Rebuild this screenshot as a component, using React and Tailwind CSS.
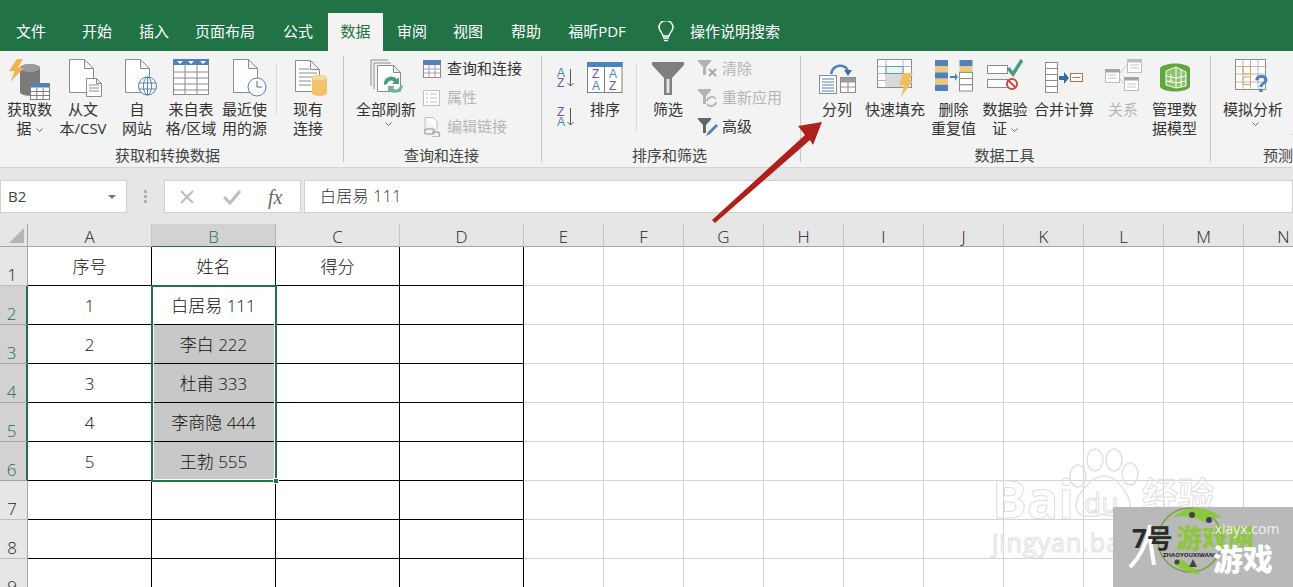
import React from 'react';

const GRAY = '#8c8c8c';
const BLUE = '#4f81bd';

// Ribbon icons, drawn in their own pixel boxes
const Doc = ({ x, y, w, h, fold = 9, stroke = GRAY }) => (
  <path
    d={`M${x} ${y}H${x + w - fold}L${x + w} ${y + fold}V${y + h}H${x}ZM${x + w - fold} ${y}V${y + fold}H${x + w}`}
    fill="#fff"
    stroke={stroke}
    strokeWidth="1"
  />
);

const MiniTable = ({ x, y, w, h, head = BLUE, stroke = '#7f7f7f' }) => (
  <g>
    <rect x={x} y={y} width={w} height={h} fill="#fff" stroke={stroke} />
    <rect x={x} y={y} width={w} height={4} fill={head} />
    <path d={`M${x} ${y + 8}H${x + w}M${x} ${y + 12}H${x + w}M${x + w / 3} ${y + 4}V${y + h}M${x + (2 * w) / 3} ${y + 4}V${y + h}`} stroke={stroke} fill="none" />
  </g>
);

const GetDataIcon = () => (
  <svg width="44" height="42" viewBox="0 0 44 42">
    <path d="M12 9c0-5 20-5 20 0v24c0 5-20 5-20 0Z" fill="#7a7a7a" />
    <ellipse cx="22" cy="9" rx="10" ry="4" fill="#9c9c9c" />
    <path d="M9 0h6l-5 9h6L2 23l5-11H1Z" fill="#f0b44c" />
    <MiniTable x={22.5} y={24.5} w={19} h={16} />
  </svg>
);

const FromTextIcon = () => (
  <svg width="36" height="38" viewBox="0 0 36 38">
    <Doc x={1.5} y={0.5} w={24} h={33} />
    <Doc x={18.5} y={19.5} w={15} h={18} fold={5} />
    <path d="M21 26h10M21 29h10M21 32h10" stroke={GRAY} />
  </svg>
);

const WebIcon = () => (
  <svg width="34" height="38" viewBox="0 0 34 38">
    <Doc x={1.5} y={0.5} w={24} h={33} />
    <circle cx="23.5" cy="27" r="9" fill="#fff" stroke={BLUE} />
    <ellipse cx="23.5" cy="27" rx="4" ry="9" fill="none" stroke={BLUE} />
    <path d="M15 24h17M15 30h17M23.5 18v18" stroke={BLUE} />
  </svg>
);

const FromTableIcon = () => (
  <svg width="36" height="36" viewBox="0 0 36 36">
    <rect x=".5" y=".5" width="35" height="35" fill="#fff" stroke={GRAY} />
    <rect x="0" y="0" width="36" height="6" fill={BLUE} />
    <path d="M.5 13H36M.5 19H36M.5 25H36M.5 31H36M12 6V36M24 6V36" stroke={GRAY} fill="none" />
    <path d="M4 2h6L7 5ZM15 2h6l-3 3ZM27 2h6l-3 3Z" fill="#fff" />
  </svg>
);

const RecentIcon = () => (
  <svg width="36" height="38" viewBox="0 0 36 38">
    <Doc x={1.5} y={0.5} w={24} h={33} />
    <circle cx="25" cy="28" r="9" fill="#fff" stroke={BLUE} />
    <path d="M25 22v6h5" stroke="#666" fill="none" />
  </svg>
);

const ExistingIcon = () => (
  <svg width="34" height="38" viewBox="0 0 34 38">
    <Doc x={1.5} y={1.5} w={24} h={31} />
    <path d="M5 10h10M5 14h18M5 18h18M5 22h12M5 26h12" stroke={GRAY} />
    <path d="M18 19c0-4 15-4 15 0v15c0 4-15 4-15 0Z" fill="#f2c36b" />
    <ellipse cx="25.5" cy="19" rx="7.5" ry="2.5" fill="#f7d998" />
  </svg>
);

const RefreshAllIcon = () => (
  <svg width="36" height="38" viewBox="0 0 36 38">
    <path d="M1 27V1h17M4 30V4h17" fill="none" stroke={GRAY} />
    <Doc x={7.5} y={6.5} w={23} h={26} fold={7} />
    <path d="M14 26a7.5 7.5 0 0 1 13-6l2-2v7h-7l2-2a4 4 0 0 0-7 2Z" fill="#4a9a7f" />
    <path d="M33 26a8 8 0 0 1-13 6l-2 2v-7h7l-2 2a4 4 0 0 0 7-2Z" fill="#6fb59c" />
  </svg>
);

const SortIcon = () => (
  <svg width="36" height="32" viewBox="0 0 36 32" fontFamily="'Liberation Sans',sans-serif" fontSize="12">
    <rect x=".5" y=".5" width="34.5" height="30" fill="#fff" stroke="#7f7f7f" />
    <rect x="0" y="0" width="35.5" height="5" fill={BLUE} />
    <path d="M17.5 5v26" stroke="#7f7f7f" />
    <text x="5" y="16" fill="#7a4fa3">Z</text>
    <text x="5" y="28" fill={BLUE}>A</text>
    <text x="22" y="16" fill={BLUE}>A</text>
    <text x="22" y="28" fill="#7a4fa3">Z</text>
  </svg>
);

const SortSmall = ({ top, bottom, topColor, bottomColor }) => (
  <svg className="overflow-visible" width="20" height="20" viewBox="0 0 20 20" fontFamily="'Liberation Sans',sans-serif" fontSize="12">
    <text x="1" y="9" fill={topColor}>{top}</text>
    <text x="1" y="19" fill={bottomColor}>{bottom}</text>
    <path d="M14.5 1v17M11.5 15l3 3 3-3" stroke="#555" fill="none" />
  </svg>
);

const FunnelIcon = () => (
  <svg width="32" height="33" viewBox="0 0 32 33">
    <path d="M0 0h32v3L20 16v17h-8V16L0 3Z" fill="#7f7f7f" />
    <path d="M14.5 17v14h3V17Z" fill="#e6e6e6" />
  </svg>
);

const SmallFunnel = ({ color = '#b3b3b3', children }) => (
  <svg width="20" height="20" viewBox="0 0 20 20">
    <path d="M0 1h13v1.5L8 8v8H5V8L0 2.5Z" fill={color} />
    {children}
  </svg>
);

const SplitIcon = () => (
  <svg width="37" height="32" viewBox="0 0 37 32">
    <path d="M12 12C14 2 26 1 29 9" fill="none" stroke={BLUE} strokeWidth="2.5" />
    <path d="M25 8h8l-4 6Z" fill="#3f6f9f" />
    <rect x=".5" y="13.5" width="17" height="18" fill="#fff" stroke={GRAY} />
    <path d="M3 17h12M3 20h12M3 23h12M3 26h12M3 29h12" stroke={BLUE} />
    <rect x="21.5" y="15.5" width="15" height="15" fill="#fff" stroke={GRAY} />
    <path d="M21.5 20h15M21.5 25h15M29 20v11" stroke={GRAY} />
    <rect x="22" y="16" width="14" height="4" fill="#9a9a9a" />
  </svg>
);

const FlashFillIcon = () => (
  <svg width="37" height="38" viewBox="0 0 37 38">
    <rect x=".5" y=".5" width="34" height="28" fill="#fff" stroke={GRAY} />
    <path d="M.5 7.5h34M.5 14.5h34M.5 21.5h34M9 .5v28M26 .5v28" stroke="#b5b5b5" />
    <rect x="9" y="7.5" width="17" height="7" fill="#e9f4f4" stroke="#5fa0a0" />
    <rect x="9" y="15" width="17" height="13" fill="#d9d9d9" />
    <path d="M26 14h10l-4 8h4L24 38l3-12h-5Z" fill="#f0c060" />
  </svg>
);

const RemoveDupIcon = () => {
  const cells = (x, colors) => colors.map((c, i) => (
    <rect key={`${x}-${i}`} x={x} y={1 + i * 6.2} width="13" height="6.2" fill={c} stroke={c === '#fff' ? GRAY : 'none'} />
  ));
  return (
    <svg width="38" height="33" viewBox="0 0 38 33">
      {cells(0, [BLUE, '#f0c878', BLUE, '#f0c878', BLUE])}
      {cells(24.5, [BLUE, '#f0c878', '#fff', '#fff', '#fff'])}
      <path d="M15 17h5v-3l3 4-3 4v-3h-5Z" fill={BLUE} />
    </svg>
  );
};

const ValidationIcon = () => (
  <svg width="36" height="33" viewBox="0 0 36 33">
    <rect x=".5" y="6.5" width="20" height="8" fill="#fff" stroke={GRAY} />
    <rect x=".5" y="20.5" width="20" height="8" fill="#fff" stroke={GRAY} />
    <path d="M21 9l5 6L35 1" fill="none" stroke="#4a9a7f" strokeWidth="3.5" />
    <circle cx="25" cy="25" r="5" fill="#fff" stroke="#d2493a" strokeWidth="2" />
    <path d="M21.5 21.5l7 7" stroke="#d2493a" strokeWidth="2" />
  </svg>
);

const ConsolidateIcon = () => (
  <svg width="38" height="32" viewBox="0 0 38 32">
    <rect x=".5" y=".5" width="12" height="30" fill="#fff" stroke={GRAY} />
    <path d="M.5 6.5h12M.5 12.5h12M.5 18.5h12M.5 24.5h12" stroke={GRAY} />
    <path d="M14 14h5v-4l5 6-5 6v-4h-5Z" fill="#2f6ea8" />
    <rect x="25.5" y="11.5" width="12" height="8" fill="#fff" stroke="#c76a4b" />
    <path d="M27.5 15.5h8" stroke="#c76a4b" />
  </svg>
);

const RelationsIcon = () => (
  <svg width="37" height="33" viewBox="0 0 37 33">
    <rect x="22.5" y=".5" width="14" height="13" fill="#fff" stroke="#bdbdbd" />
    <rect x="22" y="0" width="15" height="3.5" fill="#bdbdbd" />
    <rect x=".5" y="10.5" width="14" height="13" fill="#fff" stroke="#bdbdbd" />
    <rect x="0" y="10" width="15" height="3.5" fill="#a5a5a5" />
    <rect x="19.5" y="18.5" width="14" height="13" fill="#fff" stroke="#bdbdbd" />
    <rect x="19" y="18" width="15" height="3.5" fill="#a5a5a5" />
    <path d="M15 14L22 6M15 20l4 5M3 16h8M3 19h8M25 6h9M25 9h9M22 25h9M22 28h9" stroke="#c4c4c4" />
  </svg>
);

const DataModelIcon = () => (
  <svg width="30" height="30" viewBox="0 0 30 30">
    <path d="M0 6c4-6 26-6 30 0v19c-4 6-26 6-30 0Z" fill="#63a63f" />
    <path d="M6 9l10-4 10 5v14l-10 2-10-3Z" fill="#8cc56a" stroke="#fff" />
    <path d="M16 5v21M6 14l10 2 10-2M6 19l10 2 10-2M21 8v17" stroke="#fff" fill="none" />
    <path d="M11 12v8M9 18l2 2 2-2" stroke="#fff" fill="none" />
  </svg>
);

const WhatIfIcon = () => (
  <svg width="36" height="36" viewBox="0 0 36 36" fontFamily="'Liberation Sans',sans-serif">
    <rect x=".5" y=".5" width="30" height="30" fill="#fff" stroke={GRAY} />
    <path d="M.5 7.5h30M.5 15h30M.5 23h30M8 .5v30M15.5 .5v30M23 .5v30" stroke="#b5b5b5" />
    <rect x="8" y="7.5" width="7.5" height="7.5" fill="none" stroke="#e0a060" />
    <rect x="8" y="18" width="7.5" height="7.5" fill="none" stroke="#e0a060" />
    <text x="19" y="33" fontSize="24" fontWeight="700" fill={BLUE}>?</text>
  </svg>
);

// Small ribbon icons
const QueryIcon = () => (
  <svg width="18" height="18" viewBox="0 0 18 18">
    <rect x=".5" y=".5" width="17" height="17" fill="#fff" stroke={GRAY} />
    <rect x="0" y="0" width="18" height="5" fill={BLUE} />
    <path d="M6 5v13M12 5v13M1 9h16M1 13h16" stroke="#a0a0a0" />
  </svg>
);

const PropsIcon = () => (
  <svg width="18" height="18" viewBox="0 0 18 18">
    <rect x=".5" y="1.5" width="16" height="15" fill="#fff" stroke="#c0c0c0" />
    <path d="M3 5h2M7 5h7M3 9h2M7 9h7M3 13h2M7 13h7" stroke="#bfbfbf" />
  </svg>
);

const EditLinksIcon = () => (
  <svg width="18" height="20" viewBox="0 0 18 20">
    <path d="M2 .5h8l4 4v8M2 .5v12" fill="#fff" stroke="#c0c0c0" />
    <path d="M4 12h5a2.5 2.5 0 0 1 0 5H4a2.5 2.5 0 0 1 0-5ZM9 15h5a2.5 2.5 0 0 1 0 5H9" fill="none" stroke="#b0b0b0" strokeWidth="1.5" />
  </svg>
);

const ClearIcon = () => (
  <SmallFunnel>
    <path d="M11 10l7 7M18 10l-7 7" stroke="#a8a8a8" strokeWidth="2" />
  </SmallFunnel>
);

const ReapplyIcon = () => (
  <SmallFunnel>
    <path d="M9 13a5 5 0 0 1 9-2M18 14a5 5 0 0 1-9 2" stroke="#b3b3b3" strokeWidth="1.8" fill="none" />
  </SmallFunnel>
);

const AdvancedIcon = () => (
  <SmallFunnel color="#666">
    <path d="M8 19l2-4 8-8 2 2-8 8Z" fill={BLUE} />
  </SmallFunnel>
);

const BigButton = ({ icon, lines, width, disabled, className = '' }) => (
  <div className={`flex flex-col items-center ${width} ${className}`}>
    <div className="flex h-[49px] items-start pt-[8px]">{icon}</div>
    <div className={`flex flex-col items-center whitespace-nowrap text-[15px] leading-[19px] ${disabled ? 'text-[#b5b5b5]' : 'text-[#333]'}`}>
      {lines.map((l, i) => <span key={i} className="flex items-center">{l}</span>)}
    </div>
  </div>
);

const Caret = () => (
  <svg className="ml-[4px] mt-[3px]" width="7" height="5" viewBox="0 0 7 5" fill="none" stroke="#666">
    <path d="M.5 .5l3 3 3-3" />
  </svg>
);

const SmallButton = ({ icon, label, disabled }) => (
  <div className={`flex h-[29px] items-center whitespace-nowrap text-[15px] ${disabled ? 'text-[#b5b5b5]' : 'text-[#333]'}`}>
    <span className="flex w-[24px] shrink-0 items-center">{icon}</span>
    {label}
  </div>
);

const Group = ({ label, width, labelClass = '', children }) => (
  <div className={`flex shrink-0 flex-col ${width}`}>
    <div className="flex h-[95px] items-start">{children}</div>
    <div className={`text-center text-[15px] leading-[19px] text-[#444] ${labelClass}`}>{label}</div>
  </div>
);

const GroupSep = () => <div className="mt-[5px] h-[106px] w-px shrink-0 bg-[#c8c8c8]" />;

const tabs = [
  ['文件', 'ml-[4px] w-[54px]'],
  ['开始', 'ml-[12px] w-[54px]'],
  ['插入', 'ml-[3px] w-[54px]'],
  ['页面布局', 'ml-[2px] w-[84px]'],
  ['公式', 'ml-[4px] w-[54px]'],
  ['数据', 'ml-[3px] w-[55px] bg-[#f3f3f3] text-[#217346]'],
  ['审阅', 'ml-[2px] w-[54px]'],
  ['视图', 'ml-[2px] w-[54px]'],
  ['帮助', 'ml-[4px] w-[54px]'],
  ['福昕PDF', 'ml-[3px] w-[82px]'],
];

const colHeads = ['A', 'B', 'C', 'D', 'E', 'F', 'G', 'H', 'I', 'J', 'K', 'L', 'M', 'N'];

const people = {
  1: ['序号', '姓名', '得分'],
  2: ['1', '白居易 111', ''],
  3: ['2', '李白 222', ''],
  4: ['3', '杜甫 333', ''],
  5: ['4', '李商隐 444', ''],
  6: ['5', '王勃 555', ''],
};

const rows = [1, 2, 3, 4, 5, 6, 7, 8, 9];

function Sheet() {
  return (
    <div className="relative font-light">
      <div className="grid h-[23px] grid-cols-[28px_repeat(4,124px)_repeat(10,80px)] grid-rows-[23px] bg-[#e6e6e6] text-[17px] leading-[26px]">
        <div className="flex items-end justify-end border-r border-b border-[#a6a6a6] pr-[3px] pb-[3px]">
          <div className="h-0 w-0 border-b-[15px] border-l-[15px] border-b-[#b5b5b5] border-l-transparent" />
        </div>
        {colHeads.map((c) => (
          <div
            key={c}
            className={c === 'B'
              ? 'border-r border-b border-r-[#b0b0b0] border-b-[#217346] bg-[#d2d2d2] text-center text-[#217346]'
              : 'border-r border-b border-r-[#c4c4c4] border-b-[#a6a6a6] text-center text-[#222]'}
          >
            {c}
          </div>
        ))}
      </div>
      <div className="relative grid auto-rows-[39px] grid-cols-[28px_repeat(4,124px)_repeat(10,80px)] text-[17px] text-[#111]">
        {rows.map((r) => {
          const picked = r >= 2 && r <= 6;
          return (
            <React.Fragment key={r}>
              <div className={picked
                ? 'flex items-end justify-center border-r-2 border-b border-r-[#217346] border-b-[#a6a6a6] bg-[#d2d2d2] pr-[3px] leading-[20px] text-[#217346]'
                : 'flex items-end justify-center border-r border-b border-r-[#a6a6a6] border-b-[#bdbdbd] bg-[#e6e6e6] pr-[3px] leading-[20px] text-[#222]'}
              >
                {r}
              </div>
              {[0, 1, 2, 3].map((c) => (
                <div
                  key={c}
                  className={`flex items-center justify-center border-r border-b border-black pt-[2px] ${c === 1 && r >= 3 && r <= 6 ? 'bg-[#c8c8c8]' : ''}`}
                >
                  {people[r] ? people[r][c] : ''}
                </div>
              ))}
              {colHeads.slice(4).map((c) => (
                <div key={c} className="border-r border-b border-[#d4d4d4]" />
              ))}
            </React.Fragment>
          );
        })}
        {/* selected range outline */}
        <div className="absolute top-[38px] left-[151px] h-[197px] w-[126px] border-2 border-[#217346]">
          <div className="h-full w-full border border-white" />
          <div className="absolute right-[-4px] bottom-[-4px] h-[6px] w-[6px] border border-white bg-[#217346]" />
        </div>
      </div>
    </div>
  );
}

function Watermark() {
  return (
    <>
      <div className="pointer-events-none absolute top-[448px] left-[990px] h-[110px] w-[240px]">
        <svg className="absolute top-0 left-[78px]" width="74" height="72" viewBox="0 0 74 72" fill="none" stroke="#e2e2e2" strokeWidth="1.5">
          <ellipse cx="10" cy="28" rx="8" ry="11" />
          <ellipse cx="27" cy="12" rx="8" ry="11" />
          <ellipse cx="46" cy="12" rx="8" ry="11" />
          <ellipse cx="62" cy="26" rx="8" ry="11" />
          <path d="M36 28c12 0 26 18 26 30 0 12-14 12-26 8-12 4-28 4-28-8 0-12 16-30 28-30Z" />
        </svg>
        <div className="absolute top-[20px] left-[2px] text-[52px] font-bold leading-[60px] text-transparent [-webkit-text-stroke:1px_#dedede]">Bai</div>
        <div className="absolute top-[38px] left-[94px] text-[28px] leading-[32px] text-transparent [-webkit-text-stroke:1px_#dedede]">du</div>
        <div className="absolute top-[28px] left-[152px] text-[36px] font-bold leading-[40px] text-transparent [-webkit-text-stroke:1px_#e2e2e2]">经验</div>
        <div className="absolute top-[78px] left-[2px] text-[25px] leading-[32px] tracking-[1px] text-transparent [-webkit-text-stroke:1px_#e0e0e0]">jingyan.baidu</div>
      </div>
      <div className="pointer-events-none absolute top-[507px] left-[1113px] h-[80px] w-[180px] overflow-hidden bg-[#b9b9b9]">
        <svg className="absolute top-0 left-[15px]" width="120" height="80" viewBox="0 0 120 80" fill="none">
          <path d="M22 18C20 34 12 50 2 60M22 32L26 58" stroke="#fff" strokeWidth="4" />
          <circle cx="62" cy="33" r="32" stroke="#7f9f4a" strokeWidth="1.5" />
          <path d="M45 10c14-12 36-12 50 2-8-3-14-1-18 4-6-5-20-8-32-6Z" fill="#8dc63f" />
          <path d="M45 56c8 6 18 10 27 12-4-6-12-12-20-16Z" fill="#8dc63f" />
          <circle cx="64" cy="8" r="3" fill="#444" />
          <circle cx="81" cy="13" r="3" fill="#345" />
          <circle cx="49" cy="55" r="2.5" fill="#444" />
          <path d="M65 52l4 8h-8Z" fill="#444" />
        </svg>
        <div className="absolute top-[17px] left-[19px] text-[26px] font-bold leading-[28px] text-[#2b2b2b]">7号</div>
        <div className="absolute top-[17px] left-[63px] text-[26px] font-black leading-[28px] text-[#8dc63f]">游戏网</div>
        <div className="absolute top-[13px] left-[98px] text-[14px] leading-[18px] text-[#f0f0f0]">.xiayx.com</div>
        <div className="absolute top-[44px] left-[50px] text-[6px] leading-[8px] font-bold text-[#222]">ZHAOYOUXIWANG</div>
        <div className="absolute top-[36px] left-[100px] text-[30px] font-black leading-[32px] text-white">游戏</div>
      </div>
    </>
  );
}

export default function App() {
  return (
    <div className="relative h-[587px] w-[1293px] overflow-hidden bg-white font-['Open_Sans','Noto_Sans_CJK_SC',sans-serif]">
      {/* title strip and tabs */}
      <div className="flex h-[51px] items-end bg-[#217346] text-[15px] leading-[36px] text-white">
        {tabs.map(([t, cls]) => (
          <div key={t} className={`h-[38px] shrink-0 text-center ${cls}`}>{t}</div>
        ))}
        <svg className="mb-[9px] ml-[20px]" width="16" height="21" viewBox="0 0 16 21" fill="none" stroke="#fff">
          <path d="M5 15c0-3-4-5-4-8.5a7 7 0 0 1 14 0C15 10 11 12 11 15Z" strokeWidth="1.5" />
          <path d="M5 17h6M6 19.5h4" strokeWidth="1.5" />
        </svg>
        <div className="ml-[16px] h-[38px]">操作说明搜索</div>
      </div>

      {/* ribbon */}
      <div className="flex h-[117px] border-b border-[#d4d4d4] bg-[#f3f3f3]">
        <Group label="获取和转换数据" labelClass="pr-[8px]" width="w-[343px]">
          <BigButton className="ml-[3px]" width="w-[53px]" icon={<GetDataIcon />} lines={['获取数', <>据<Caret /></>]} />
          <BigButton width="w-[54px]" icon={<div className="ml-[6px]"><FromTextIcon /></div>} lines={['从文', '本/CSV']} />
          <BigButton width="w-[54px]" icon={<div className="ml-[8px]"><WebIcon /></div>} lines={['自', '网站']} />
          <BigButton width="w-[54px]" icon={<FromTableIcon />} lines={['来自表', '格/区域']} />
          <BigButton width="w-[53px]" icon={<div className="ml-[10px]"><RecentIcon /></div>} lines={['最近使', '用的源']} />
          <div className="mt-[13px] ml-[5px] h-[50px] w-px bg-[#d9d9d9]" />
          <BigButton className="ml-[3px]" width="w-[56px]" icon={<div className="ml-[6px]"><ExistingIcon /></div>} lines={['现有', '连接']} />
        </Group>
        <GroupSep />
        <Group label="查询和连接" labelClass="pr-[2px]" width="w-[197px]">
          <BigButton className="ml-[12px]" width="w-[60px]" icon={<div className="ml-[4px]"><RefreshAllIcon /></div>} lines={['全部刷新', <Caret key="c" />]} />
          <div className="ml-[7px] pt-[3px]">
            <SmallButton icon={<QueryIcon />} label="查询和连接" />
            <SmallButton disabled icon={<PropsIcon />} label="属性" />
            <SmallButton disabled icon={<EditLinksIcon />} label="编辑链接" />
          </div>
        </Group>
        <GroupSep />
        <Group label="排序和筛选" labelClass="pr-[3px]" width="w-[258px]">
          <div className="ml-[14px] flex h-[76px] w-[21px] flex-col justify-between pt-[17px]">
            <SortSmall top="A" bottom="Z" topColor={BLUE} bottomColor="#7a4fa3" />
            <SortSmall top="Z" bottom="A" topColor="#7a4fa3" bottomColor={BLUE} />
          </div>
          <BigButton width="w-[56px]" icon={<div className="pt-[3px]"><SortIcon /></div>} lines={['排序']} />
          <div className="mt-[13px] ml-[3px] h-[68px] w-px bg-[#d9d9d9]" />
          <BigButton className="ml-[5px]" width="w-[52px]" icon={<div className="pt-[3px]"><FunnelIcon /></div>} lines={['筛选']} />
          <div className="ml-[4px] pt-[3px]">
            <SmallButton disabled icon={<ClearIcon />} label="清除" />
            <SmallButton disabled icon={<ReapplyIcon />} label="重新应用" />
            <SmallButton icon={<AdvancedIcon />} label="高级" />
          </div>
        </Group>
        <GroupSep />
        <Group label="数据工具" labelClass="pr-[2px]" width="w-[409px]">
          <BigButton className="ml-[8px]" width="w-[56px]" icon={<div className="pt-[3px]"><SplitIcon /></div>} lines={['分列']} />
          <BigButton width="w-[60px]" icon={<FlashFillIcon />} lines={['快速填充']} />
          <BigButton width="w-[57px]" icon={<RemoveDupIcon />} lines={['删除', '重复值']} />
          <BigButton width="w-[46px]" icon={<ValidationIcon />} lines={['数据验', <>证<Caret /></>]} />
          <BigButton width="w-[72px]" icon={<div className="pt-[3px]"><ConsolidateIcon /></div>} lines={['合并计算']} />
          <BigButton disabled width="w-[46px]" icon={<RelationsIcon />} lines={['关系']} />
          <BigButton width="w-[57px]" icon={<div className="pt-[3px]"><DataModelIcon /></div>} lines={['管理数', '据模型']} />
        </Group>
        <GroupSep />
        <Group label="预测" labelClass="pl-[4px]" width="w-[130px]">
          <BigButton className="ml-[12px]" width="w-[60px]" icon={<WhatIfIcon />} lines={['模拟分析', <Caret key="c" />]} />
          <BigButton className="ml-[5px]" width="w-[60px]" icon={<span />} lines={['预测', '工作表']} />
        </Group>
      </div>

      {/* formula bar */}
      <div className="flex h-[56px] items-start bg-[#e6e6e6] pt-[12px]">
        <div className="flex h-[33px] w-[127px] items-center justify-between border border-[#d0d0d0] bg-white pr-[10px] pl-[7px] text-[15px] text-[#444]">
          B2
          <div className="h-0 w-0 border-x-[4px] border-t-[4px] border-x-transparent border-t-[#777]" />
        </div>
        <div className="ml-[17px] flex h-[33px] flex-col justify-center gap-[2px]">
          <div className="h-[3px] w-[3px] bg-[#b0b0b0]" />
          <div className="h-[3px] w-[3px] bg-[#b0b0b0]" />
          <div className="h-[3px] w-[3px] bg-[#b0b0b0]" />
        </div>
        <div className="ml-[17px] flex h-[33px] w-[137px] items-center border border-[#d0d0d0] bg-white">
          <svg className="ml-[14px]" width="16" height="16" viewBox="0 0 16 16" stroke="#bdbdbd" strokeWidth="2" fill="none">
            <path d="M2 2l12 12M14 2L2 14" />
          </svg>
          <svg className="ml-[28px]" width="18" height="16" viewBox="0 0 18 16" stroke="#bdbdbd" strokeWidth="3" fill="none">
            <path d="M1 8l6 6L17 2" />
          </svg>
          <span className="ml-[27px] font-['Liberation_Serif',serif] text-[20px] italic leading-none text-[#666]">fx</span>
        </div>
        <div className="ml-[3px] flex h-[33px] flex-1 items-center border border-[#d0d0d0] bg-white pb-[2px] pl-[15px] text-[16px] font-light tracking-[0.3px] text-[#333]">
          白居易 111
        </div>
      </div>

      <Sheet />
      <Watermark />

      {/* red arrow pointing at 分列 */}
      <svg className="pointer-events-none absolute top-[118px] left-[708px]" width="120" height="110" viewBox="0 0 120 110">
        <path d="M4 102L97 17L90 8L114 4L105 27L102 22L7 105Z" fill="#b0201a" />
      </svg>
    </div>
  );
}
